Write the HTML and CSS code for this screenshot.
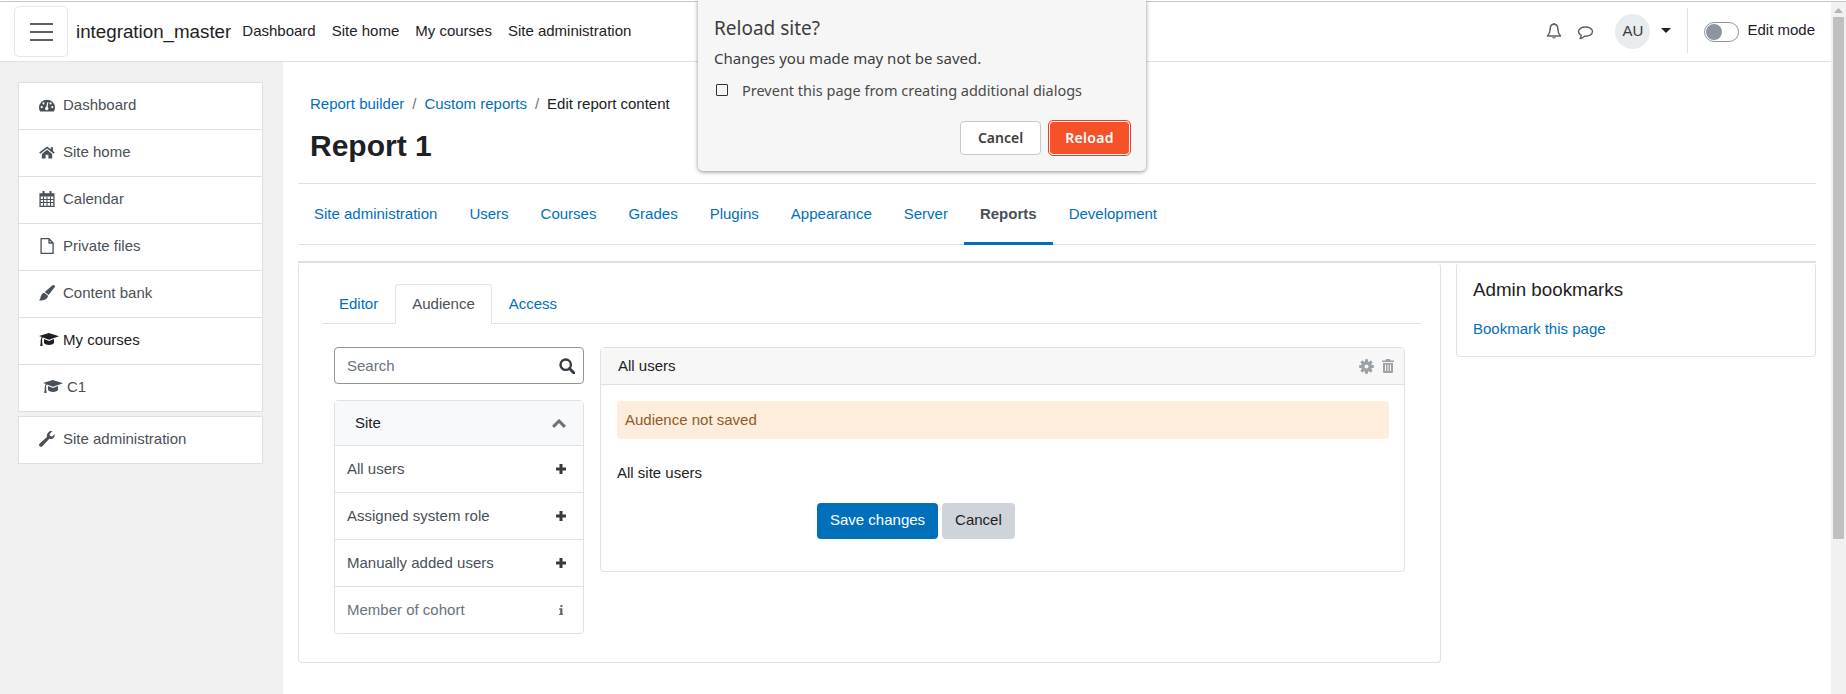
FILE: index.html
```html
<!DOCTYPE html>
<html lang="en">
<head>
<meta charset="utf-8">
<title>Report 1</title>
<link rel="stylesheet" href="styles.css">
</head>
<body>
<div class="topline"></div>
<div class="window">
  <div class="page">
    <header class="navbar">
      <button class="burger"><span></span><span></span><span></span></button>
      <span class="brand">integration_master</span>
      <nav class="primary">
        <a>Dashboard</a><a>Site home</a><a>My courses</a><a>Site administration</a>
      </nav>
      <div class="usernav">
        <svg class="i-bell" viewBox="0 0 16 17"><path d="M8 1.2C5.4 1.2 4.3 3.2 4.200 5.500C4.100 8.800 3.400 11 1.500 13H14.500C12.600 11 11.900 8.800 11.800 5.500C11.700 3.200 10.600 1.200 8 1.200Z" fill="none" stroke="#5b5f64" stroke-width="1.500" stroke-linejoin="round"/><path d="M6.200 14.300a1.900 1.900 0 0 0 3.600 0z M7 .2h2v1.400H7z" fill="#5b5f64"/></svg>
        <svg class="i-chat" viewBox="0 0 16 14"><path d="M8 1C4 1 1 3 1 5.600C1 7.200 2.100 8.500 3.800 9.300C3.700 10.500 3.200 11.500 2.600 12.600C4.400 12.200 5.800 11.300 6.900 10.200C7.300 10.200 7.600 10.200 8 10.200C12 10.200 15 8.200 15 5.600C15 3 12 1 8 1Z" fill="none" stroke="#5b5f64" stroke-width="1.400" stroke-linejoin="round"/></svg>
        <span class="avatar">AU</span>
        <span class="caret"></span>
        <span class="divider"></span>
        <span class="toggle"><span class="knob"></span></span>
        <span class="editmode">Edit mode</span>
      </div>
    </header>

    <div class="layout">
      <aside class="sidebar">
        <ul class="sidenav">
          <li><svg class="ico w16" viewBox="0 0 16 12"><path d="M0 8.200a8 8 0 0 1 16 0c0 1.400-.4 2.700-1.200 3.800H1.200C.4 10.900 0 9.600 0 8.200z" fill="#495057"/><g fill="#fff"><circle cx="2.700" cy="7.600" r="1.100"/><circle cx="4.500" cy="3.900" r="1.100"/><circle cx="11.500" cy="3.900" r="1.100"/><circle cx="13.300" cy="7.600" r="1.100"/><circle cx="7.700" cy="9" r="1.700"/><path d="M7 8.500L8.300 2.800h1L8.500 9z"/></g></svg>Dashboard</li>
          <li><svg class="ico w16" viewBox="-.5 0 17 13"><path d="M8 0L12 3.100V1h2.300v3.900L16.300 6.500l-1.200 1.300L8 2.300 .9 7.800-.3 6.500zM2.500 8L8 3.600 13.500 8v5H9.500V9h-3v4h-4z" fill="#495057"/></svg>Site home</li>
          <li><svg class="ico w16 tall" viewBox="0 0 15 16"><path d="M.6 3h13.800v12.400H.6z" fill="none" stroke="#495057" stroke-width="1.300"/><path d="M.6 3h13.800v2.500H.6zM3 0h2v4H3zM10 0h2v4h-2z" fill="#495057"/><path d="M4 5.500v9.500M7.500 5.500v9.500M11 5.500v9.500M.6 8.500h13.800M.6 11.500h13.800" stroke="#495057" stroke-width="1" fill="none"/></svg>Calendar</li>
          <li><svg class="ico w16 tall" viewBox="0 0 15 16"><path d="M1.600.7H9.500L13.600 5v10.300H1.600zM9.500.7V5h4.100" fill="none" stroke="#495057" stroke-width="1.300" stroke-linejoin="round"/></svg>Private files</li>
          <li><svg class="ico w16 tall" viewBox="0 0 16 16"><path d="M14.600 0C15.600.3 16.200 1.200 15.800 2.100L9.600 10 5.800 7.100 13.100.6C13.500.2 14 0 14.600 0zM5.200 7.800L9 10.800C8.800 13.600 5.800 16.200 0 15.300 1.600 13.900 1.400 12.500 1.900 11 2.600 9 3.900 8.100 5.200 7.800z" fill="#495057"/></svg>Content bank</li>
          <li class="current"><svg class="ico cap" viewBox="0 0 20 14"><path d="M9.800 0L20 3.200 10 6.800 4 4.600C3.200 5.200 3 6 3 7.300 3.400 7.600 3.500 8.300 3.100 8.600L3.600 13H1.200L1.800 8.600C1.400 8.300 1.400 7.600 1.900 7.300 1.900 6 2.100 4.800 3 4.100L0 3zM5 6L10 7.900 15 6V9.500C15 11 12.500 12 10 12 7.500 12 5 11 5 9.500z" fill="#1d2125"/></svg>My courses</li>
          <li class="nested"><svg class="ico cap" viewBox="0 0 20 14"><path d="M9.800 0L20 3.200 10 6.800 4 4.600C3.200 5.200 3 6 3 7.300 3.400 7.600 3.500 8.300 3.100 8.600L3.600 13H1.200L1.800 8.600C1.400 8.300 1.400 7.600 1.900 7.300 1.900 6 2.100 4.800 3 4.100L0 3zM5 6L10 7.900 15 6V9.500C15 11 12.500 12 10 12 7.500 12 5 11 5 9.500z" fill="#495057"/></svg>C1</li>
        </ul>
        <ul class="sidenav second">
          <li><svg class="ico w16 tall" viewBox="0 0 16 16"><path d="M15.700 3.200C16.100 5.500 14.600 7.800 12 8 11.300 8 10.800 7.900 10.300 7.700L3.400 15.200C2.600 16 1.300 16 .6 15.200-.2 14.500-.1 13.300.7 12.600L8 6C7.600 4.500 8 2.600 9.300 1.400 10.400.4 12-.1 13.300.2L10.600 2.900 11.100 5 13.100 5.500z" fill="#495057"/></svg>Site administration</li>
        </ul>
      </aside>

      <main class="main">
        <ol class="crumbs">
          <li><a>Report builder</a></li><li class="sep">/</li><li><a>Custom reports</a></li><li class="sep">/</li><li>Edit report content</li>
        </ol>
        <h1 class="title">Report 1</h1>
        <nav class="sectabs">
          <a>Site administration</a><a>Users</a><a>Courses</a><a>Grades</a><a>Plugins</a><a>Appearance</a><a>Server</a><a class="active">Reports</a><a>Development</a>
        </nav>
        <div class="content">
          <section class="card editor">
            <div class="tabs">
              <a>Editor</a><a class="active">Audience</a><a>Access</a>
            </div>
            <div class="columns">
              <div class="leftcol">
                <div class="search">
                  <span>Search</span>
                  <svg class="i-search" viewBox="0 0 16 16"><circle cx="6.700" cy="6.700" r="5.200" fill="none" stroke="#343a40" stroke-width="2.400"/><path d="M10.500 10.500L15 15" stroke="#343a40" stroke-width="3" stroke-linecap="round"/></svg>
                </div>
                <div class="accordion">
                  <div class="acc-head"><span>Site</span><svg class="i-chev" viewBox="0 0 14 9"><path d="M1.100 7.900L7 2l5.900 5.900" fill="none" stroke="#6a737b" stroke-width="3"/></svg></div>
                  <div class="acc-row"><span>All users</span><svg class="i-plus" viewBox="0 0 10 10"><path d="M5 0v10M0 5h10" stroke="#343a40" stroke-width="3"/></svg></div>
                  <div class="acc-row"><span>Assigned system role</span><svg class="i-plus" viewBox="0 0 10 10"><path d="M5 0v10M0 5h10" stroke="#343a40" stroke-width="3"/></svg></div>
                  <div class="acc-row"><span>Manually added users</span><svg class="i-plus" viewBox="0 0 10 10"><path d="M5 0v10M0 5h10" stroke="#343a40" stroke-width="3"/></svg></div>
                  <div class="acc-row muted"><span>Member of cohort</span><svg class="i-info" viewBox="0 0 5 12"><path d="M1.500 0h2.400v2.400H1.500zM0 4h3.900v6.400H5V12H0v-1.600h1.200V5.600H0z" fill="#5f666d"/></svg></div>
                </div>
              </div>
              <div class="panel">
                <div class="panel-head">
                  <span>All users</span>
                  <span class="panel-tools">
                    <svg class="i-gear" viewBox="0 0 14 14"><path d="M7 .2v13.600M.2 7h13.600M2.200 2.200l9.600 9.600M11.800 2.200l-9.600 9.600" stroke="#9ca1a6" stroke-width="2.800"/><circle cx="7" cy="7" r="5" fill="#9ca1a6"/><circle cx="7" cy="7" r="1.900" fill="#f7f7f7"/></svg>
                    <svg class="i-trash" viewBox="0 0 12 14"><path d="M4 0h4l.6 1.500H12V3H0V1.500h3.400zM1 4h10v9a1 1 0 0 1-1 1H2a1 1 0 0 1-1-1zM3 5.500V12h1V5.500zM5.500 5.500V12h1V5.500zM8 5.500V12h1V5.500z" fill="#9ca1a6" fill-rule="evenodd"/></svg>
                  </span>
                </div>
                <div class="panel-body">
                  <div class="alert">Audience not saved</div>
                  <p class="allsite">All site users</p>
                  <div class="actions">
                    <button class="btn primary-btn">Save changes</button><button class="btn secondary-btn">Cancel</button>
                  </div>
                </div>
              </div>
            </div>
          </section>
          <section class="card bookmarks">
            <h2>Admin bookmarks</h2>
            <a>Bookmark this page</a>
          </section>
        </div>
      </main>
    </div>
  </div>
  <div class="scrollbar">
    <svg class="sb-up" viewBox="0 0 9 5"><path d="M4.500 0L9 5H0z" fill="#b5b5b5"/></svg>
    <div class="sb-thumb"></div>
  </div>
</div>

<div class="dialog">
  <div class="d-title">Reload site?</div>
  <div class="d-text">Changes you made may not be saved.</div>
  <div class="d-check"><span class="box"></span><span>Prevent this page from creating additional dialogs</span></div>
  <div class="d-actions">
    <button class="d-btn d-cancel">Cancel</button>
    <button class="d-btn d-reload">Reload</button>
  </div>
</div>
</body>
</html>
```

FILE: styles.css
```css
* { box-sizing: border-box; }
html, body { margin: 0; padding: 0; }
body {
  width: 1846px;
  height: 694px;
  overflow: hidden;
  position: relative;
  background: #fff;
  font-family: "Liberation Sans", Arial, sans-serif;
  font-size: 15px;
  line-height: 22.5px;
  color: #1d2125;
}
a { color: #0070bc; text-decoration: none; }
ul, ol { list-style: none; margin: 0; padding: 0; }

.topline { height: 2px; border-top: 1px solid #fff; background: #c6c6c6; }
.window { display: flex; height: 692px; }
.page { width: 1831px; display: flex; flex-direction: column; }

/* navbar */
.navbar {
  height: 60px;
  flex: none;
  display: flex;
  align-items: center;
  padding: 0 16px 0 14px;
  border-bottom: 1px solid #dfe1e3;
  background: #fff;
}
.burger {
  width: 54px;
  height: 51px;
  background: #fff;
  border: 1px solid #e6e6e6;
  border-radius: 5px;
  display: flex;
  flex-direction: column;
  align-items: center;
  justify-content: center;
  gap: 6px;
  padding: 0;
}
.burger span { display: block; width: 23px; height: 2px; background: #5f5f5f; }
.brand { margin-left: 8px; font-size: 18.75px; line-height: 28px; color: #1d2125; }
.primary { display: flex; gap: 16px; margin-left: 11px; }
.primary a { color: #1d2125; }
.usernav { margin-left: auto; display: flex; align-items: center; }
.i-bell { width: 16px; height: 17px; margin-top: -1px; }
.i-chat { width: 17px; height: 14px; margin-left: 15px; margin-top: 2px; }
.avatar {
  width: 35px;
  height: 35px;
  border-radius: 50%;
  background: #e9ecef;
  margin-left: 21px;
  display: flex;
  align-items: center;
  justify-content: center;
  color: #343a40;
  font-size: 15px;
}
.caret {
  width: 0;
  height: 0;
  margin-left: 11px;
  border-left: 5px solid transparent;
  border-right: 5px solid transparent;
  border-top: 5px solid #1d2125;
  margin-top: -3px;
}
.divider { width: 1px; height: 45px; background: #dee2e6; margin-left: 16px; margin-top: -2px; }
.toggle {
  width: 35px;
  height: 20px;
  margin-left: 16px;
  border: 1px solid #8f959e;
  border-radius: 10px;
  background: #fff;
  padding: 1px;
  display: flex;
}
.knob { width: 16px; height: 16px; border-radius: 50%; background: #8f959e; }
.editmode { margin-left: 8px; margin-top: -3px; color: #1d2125; }

/* layout */
.layout { flex: 1; display: flex; min-height: 0; }
.sidebar { width: 283px; flex: none; background: #f0f0f0; padding: 20px 20px 0 18px; }
.sidenav { background: #fff; border: 1px solid #e0e0e0; }
.sidenav.second { margin-top: 4px; }
.sidenav li {
  height: 47px;
  display: flex;
  align-items: center;
  padding: 0 0 1.5px 20px;
  color: #495057;
  border-top: 1px solid #e0e0e0;
}
.sidenav li:first-child { height: 46px; border-top: 0; }
.sidenav li.current { color: #1d2125; }
.sidenav li.nested { padding-left: 24px; }
.ico { flex: none; }
.w16 { width: 16px; height: 13px; margin-right: 8px; }
.w16.tall { height: 16px; }
.cap { width: 20px; height: 14px; margin-right: 4px; }

/* main */
.main { flex: 1; padding: 31px 15px 0; min-width: 0; }
.crumbs { display: flex; padding-left: 12px; height: 22px; }
.crumbs .sep { padding: 0 8px; color: #6a737b; }
.title { margin: 13px 0 0 12px; font-size: 30px; line-height: 36px; font-weight: 700; color: #1d2125; }
.sectabs {
  display: flex;
  margin-top: 19px;
  border-top: 1px solid #dee2e6;
  border-bottom: 1px solid #dee2e6;
  height: 62px;
}
.sectabs a { padding: 19px 16px 0; height: 61px; line-height: 22.5px; }
.sectabs a.active { font-weight: 700; color: #495057; border-bottom: 3px solid #0070bc; }
.content {
  display: grid;
  grid-template-columns: 1143px 360px;
  gap: 15px;
  align-items: start;
  margin-top: 16px;
  border-top: 2px solid #e0e0e0;
}
.card { border: 1px solid #dee2e6; border-top-color: transparent; border-radius: 4px; background: #fff; }
.editor { height: 400px; padding: 20px 19px 0 23px; }

.tabs { display: flex; height: 40px; border-bottom: 1px solid #dee2e6; }
.tabs a { padding: 8px 16px; border: 1px solid transparent; border-bottom: 0; height: 40px; line-height: 22.5px; }
.tabs a.active { color: #495057; background: #fff; border-color: #dee2e6; border-radius: 4px 4px 0 0; }

.columns { display: flex; align-items: flex-start; gap: 16px; padding: 23px 0 0 12px; }
.leftcol { width: 250px; flex: none; }
.search {
  height: 37px;
  border: 1px solid #8f959e;
  border-radius: 4px;
  display: flex;
  align-items: center;
  justify-content: space-between;
  padding: 1px 8px 0 12px;
  color: #6a737b;
}
.i-search { width: 16px; height: 16px; }
.accordion { margin-top: 16px; border: 1px solid #dee2e6; border-radius: 4px; }
.acc-head {
  height: 44px;
  background: #f8f9fa;
  display: flex;
  align-items: center;
  justify-content: space-between;
  padding: 0 17px 0 20px;
  color: #1d2125;
}
.i-chev { width: 14px; height: 9px; }
.acc-row {
  height: 47px;
  border-top: 1px solid #dee2e6;
  display: flex;
  align-items: center;
  justify-content: space-between;
  padding: 0 17px 0 12px;
  color: #495057;
}
.acc-row.muted { color: #6a737b; }
.i-plus { width: 10px; height: 10px; }
.i-info { width: 4.500px; height: 10px; margin-right: 3px; }

.panel { width: 805px; flex: none; height: 225px; border: 1px solid #dee2e6; border-radius: 4px; }
.panel-head {
  height: 37px;
  background: #f7f7f7;
  border-bottom: 1px solid #dee2e6;
  display: flex;
  align-items: center;
  justify-content: space-between;
  padding: 0 10px 0 17px;
  color: #1d2125;
}
.panel-tools { display: flex; gap: 8px; align-items: center; }
.i-gear { width: 15px; height: 15px; }
.i-trash { width: 12px; height: 14px; }
.panel-body { padding: 16px 15px 0 16px; }
.alert { height: 38px; padding: 8px; background: #feeddd; color: #8e5c2a; border-radius: 4px; }
.allsite { margin: 23px 0 0; color: #1d2125; }
.actions { display: flex; gap: 4px; margin: 18px 0 0 200px; }
.btn {
  height: 36px;
  padding: 0 13px;
  border: 0;
  border-radius: 4px;
  font: inherit;
}
.primary-btn { background: #0070bc; color: #fff; }
.secondary-btn { background: #ced4da; color: #1d2125; }

.bookmarks { height: 94px; padding: 14px 15px 15px 16px; }
.bookmarks h2 { margin: 0; font-size: 18.75px; line-height: 24px; font-weight: 400; color: #1d2125; }
.bookmarks a { display: block; margin-top: 16px; }

/* scrollbar */
.scrollbar { width: 15px; background: #f1f1f1; padding: 0 2px 0 2px; display: flex; flex-direction: column; align-items: center; }
.sb-up { width: 9px; height: 5px; margin: 6px 0 4px; flex: none; }
.sb-thumb { width: 11px; height: 522px; background: #c0c0c0; }

/* native dialog */
.dialog {
  position: absolute;
  left: 698px;
  top: 0;
  width: 448px;
  height: 171px;
  background: #f6f6f6;
  border-radius: 0 0 5px 5px;
  box-shadow: 0 1px 4px rgba(0,0,0,.45);
  font-family: "Noto Sans", "Open Sans", sans-serif;
  color: #3d3d3d;
  padding: 0 16px 0 17px;
}
.d-title { font-size: 19px; line-height: 24px; padding-top: 16px; height: 38px; margin-left: -1px; }
.d-text { font-size: 15px; line-height: 20px; margin-top: 10px; margin-left: -1px; }
.d-check { display: flex; align-items: center; margin-top: 12px; font-size: 14.5px; line-height: 20px; color: #4a4a4a; }
.box { width: 12px; height: 12px; border: 1.5px solid #333; border-radius: 1px; margin-right: 14px; flex: none; margin-left: 1px; }
.d-actions { display: flex; justify-content: flex-end; gap: 8px; margin-top: 21px; }
.d-btn {
  width: 81px;
  height: 34px;
  font: 600 14px/1 "Noto Sans", "Open Sans", sans-serif;
  border-radius: 4px;
}
.d-cancel { background: #fff; border: 1px solid #c8c8c8; color: #3d3d3d; }
.d-reload { background: #f7512a; color: #fff; border: 1px solid #fff; outline: 1.5px solid #f03a2e; letter-spacing: .3px; }
```
